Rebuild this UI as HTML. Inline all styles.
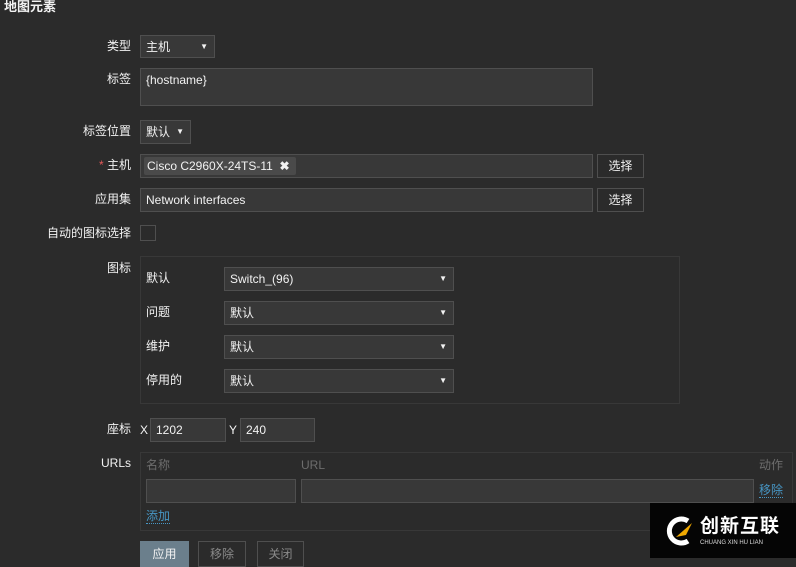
<!DOCTYPE html>
<html><head><meta charset="utf-8"><style>
*{box-sizing:border-box;margin:0;padding:0}
html,body{width:796px;height:558px}
body{background:#2b2b2b;color:#f2f2f2;font-family:"Liberation Sans","Noto Sans CJK SC",sans-serif;font-size:12px;position:relative;overflow:hidden}
.a{position:absolute;line-height:14px}
.l{position:absolute;right:665px;text-align:right;white-space:nowrap;line-height:14px}
.in{position:absolute;background:#383838;border:1px solid #4f4f4f;padding-left:5px;white-space:nowrap;display:flex;align-items:center;line-height:14px}
.sel::after{content:"▼";position:absolute;right:6px;top:50%;transform:translateY(-50%);font-size:8px;color:#f2f2f2}
.btn{position:absolute;border:1px solid #4f4f4f;background:#2b2b2b;color:#f2f2f2;display:flex;align-items:center;justify-content:center;line-height:14px}
.box{position:absolute;border:1px solid #383838}
.lk{color:#4796c4;border-bottom:1px dotted #4796c4}
.g{color:#6d6d6d}
</style></head><body>
<div class="a" style="left:4px;top:0;font-size:13px;font-weight:bold">地图元素</div>

<div class="l" style="top:39px">类型</div>
<div class="in sel" style="left:140px;top:35px;width:75px;height:23px">主机</div>

<div class="l" style="top:72px">标签</div>
<div class="in" style="left:140px;top:68px;width:453px;height:38px;align-items:flex-start;padding-top:4px">{hostname}</div>

<div class="l" style="top:124px">标签位置</div>
<div class="in sel" style="left:140px;top:120px;width:51px;height:24px">默认</div>

<div class="l" style="top:158px"><span style="color:#e45959">* </span>主机</div>
<div class="in" style="left:140px;top:154px;width:453px;height:24px;padding-left:3px"><span style="display:inline-block;background:#4a4a4a;padding:2px 6px 2px 3px;border-radius:2px">Cisco C2960X-24TS-11 &nbsp;<b>✖</b></span></div>
<div class="btn" style="left:597px;top:154px;width:47px;height:24px">选择</div>

<div class="l" style="top:192px">应用集</div>
<div class="in" style="left:140px;top:188px;width:453px;height:24px">Network interfaces</div>
<div class="btn" style="left:597px;top:188px;width:47px;height:24px">选择</div>

<div class="l" style="top:226px">自动的图标选择</div>
<div class="a" style="left:140px;top:225px;width:16px;height:16px;border:1px solid #4f4f4f"></div>

<div class="l" style="top:261px">图标</div>
<div class="box" style="left:140px;top:256px;width:540px;height:148px"></div>
<div class="a" style="left:146px;top:271px">默认</div>
<div class="in sel" style="left:224px;top:267px;width:230px;height:24px">Switch_(96)</div>
<div class="a" style="left:146px;top:305px">问题</div>
<div class="in sel" style="left:224px;top:301px;width:230px;height:24px">默认</div>
<div class="a" style="left:146px;top:339px">维护</div>
<div class="in sel" style="left:224px;top:335px;width:230px;height:24px">默认</div>
<div class="a" style="left:146px;top:373px">停用的</div>
<div class="in sel" style="left:224px;top:369px;width:230px;height:24px">默认</div>

<div class="l" style="top:422px">座标</div>
<div class="a" style="left:140px;top:423px">X</div>
<div class="in" style="left:150px;top:418px;width:76px;height:24px">1202</div>
<div class="a" style="left:229px;top:423px">Y</div>
<div class="in" style="left:240px;top:418px;width:75px;height:24px">240</div>

<div class="l" style="top:456px">URLs</div>
<div class="box" style="left:140px;top:452px;width:653px;height:79px"></div>
<div class="a g" style="left:146px;top:458px">名称</div>
<div class="a g" style="left:301px;top:458px">URL</div>
<div class="a g" style="left:759px;top:458px">动作</div>
<div class="in" style="left:146px;top:479px;width:150px;height:24px"></div>
<div class="in" style="left:301px;top:479px;width:453px;height:24px"></div>
<div class="a" style="left:759px;top:483px"><span class="lk">移除</span></div>
<div class="a" style="left:146px;top:509px"><span class="lk">添加</span></div>

<div class="btn" style="left:140px;top:541px;width:49px;height:26px;background:#6b7f8c;border-color:#6b7f8c">应用</div>
<div class="btn" style="left:198px;top:541px;width:48px;height:26px;color:#8a8a8a">移除</div>
<div class="btn" style="left:257px;top:541px;width:47px;height:26px;color:#8a8a8a">关闭</div>

<div class="a" style="left:650px;top:503px;width:146px;height:55px;background:#050505">
<svg class="a" style="left:14px;top:12px" width="32" height="32" viewBox="0 0 32 32"><path d="M24 6 A12 12 0 1 0 24 26" fill="none" stroke="#fff" stroke-width="5"/><path d="M12 22 L28 8 L22 20 Z" fill="#f0a800"/></svg>
<div class="a" style="left:50px;top:13px;font-size:19px;line-height:22px;font-weight:bold;color:#fff;letter-spacing:1px">创新互联</div>
<div class="a" style="left:50px;top:37px;font-size:6px;line-height:7px;color:#ddd">CHUANG XIN HU LIAN</div>
</div>
</body></html>
